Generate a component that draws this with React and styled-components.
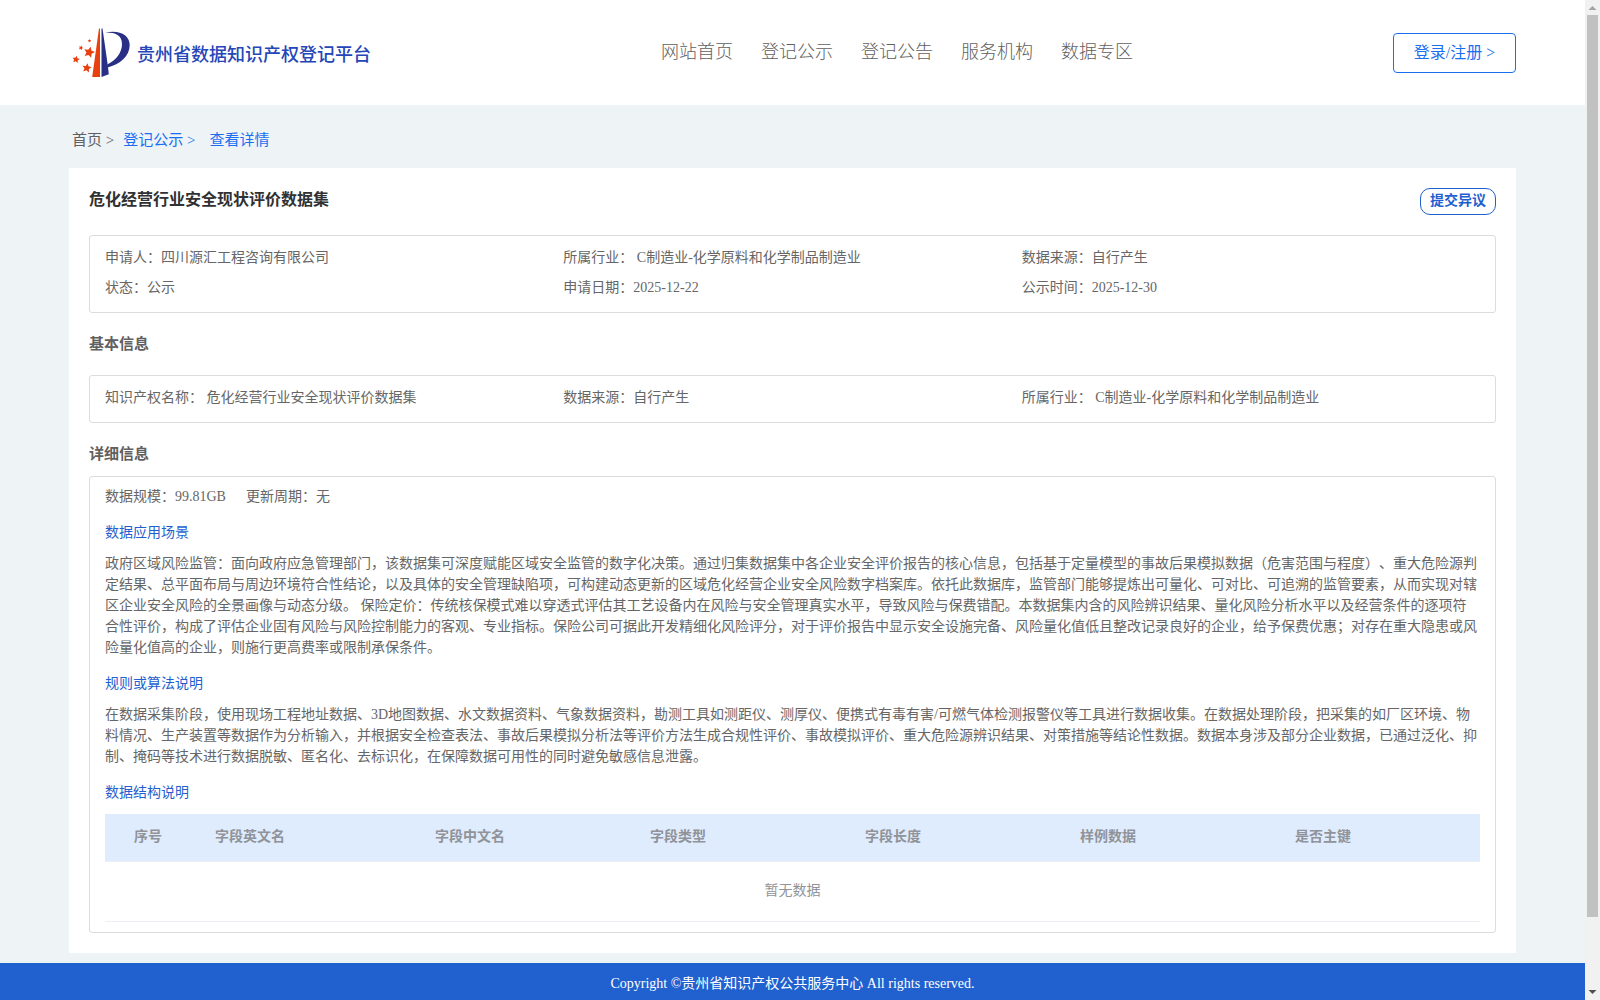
import React from "react";
import styled, { createGlobalStyle } from "styled-components";

const Global = createGlobalStyle`
  * { box-sizing: border-box; }
  html, body { margin: 0; padding: 0; }
  body {
    height: 1000px;
    overflow: hidden;
    color: #606266;
    font-family: "Liberation Serif", "Noto Sans CJK SC", serif;
    font-size: 14px;
    text-spacing-trim: space-all;
  }
  h1, h2, h3, p { margin: 0; }
`;

const Window = styled.div`
  display: flex;
  width: 1600px;
  height: 1000px;
`;

const Page = styled.div`
  display: flex;
  flex-direction: column;
  width: 1585px;
  height: 1000px;
  background: #eef3f6;
`;

const Header = styled.header`
  display: flex;
  align-items: center;
  height: 105px;
  flex: none;
  padding: 0 69px 0 72px;
  background: #fff;
`;

const Brand = styled.div`
  display: flex;
  align-items: center;
  width: 300px;
  padding-top: 1px;
  svg { flex: none; }
`;

const BrandName = styled.span`
  margin-left: 7px;
  padding-top: 3px;
  color: #2546b8;
  font-size: 18px;
  line-height: 24px;
  font-weight: 500;
  white-space: nowrap;
`;

const Nav = styled.nav`
  display: flex;
  gap: 28px;
  margin-left: 289px;
  padding-bottom: 1px;
`;

const NavLink = styled.a`
  color: #606060;
  font-size: 18px;
  line-height: 24px;
  white-space: nowrap;
  font-weight: 300;
`;

const LoginButton = styled.button`
  width: 123px;
  height: 40px;
  margin-left: auto;
  padding: 0;
  border: 1px solid #1a6ff0;
  border-radius: 4px;
  background: #fff;
  color: #1a6ff0;
  font-family: inherit;
  font-size: 16px;
  line-height: 24px;
  white-space: nowrap;
`;

const Breadcrumb = styled.div`
  display: flex;
  height: 63px;
  flex: none;
  padding: 23px 0 0 72px;
  font-size: 15px;
  line-height: 24px;
`;

const Crumb = styled.span`
  margin-right: ${(p) => p.$gap || 0}px;
  color: ${(p) => (p.$active ? "#1a6ff0" : "#606060")};
  white-space: pre;
`;

const Card = styled.main`
  display: flex;
  flex-direction: column;
  width: 1447px;
  height: 785px;
  flex: none;
  margin-left: 69px;
  padding: 20px 20px 0;
  background: #fff;
`;

const TitleRow = styled.div`
  display: flex;
  justify-content: space-between;
  height: 47px;
`;

const Title = styled.h1`
  padding-top: 1px;
  color: #303133;
  font-size: 16px;
  line-height: 22px;
  font-weight: 700;
`;

const ObjectionButton = styled.button`
  width: 76px;
  height: 27px;
  padding: 0 0 1px;
  border: 1px solid #1f5fcf;
  border-radius: 10px;
  background: #fff;
  color: #1f5fcf;
  font-family: inherit;
  font-size: 14px;
  line-height: 20px;
  font-weight: 700;
`;

const Box = styled.section`
  flex: none;
  height: ${(p) => p.$height}px;
  padding: ${(p) => p.$top}px 15px 0;
  border: 1px solid #dcdcde;
  border-radius: 3px;
`;

const InfoGrid = styled.div`
  display: grid;
  grid-template-columns: repeat(3, 1fr);
  grid-auto-rows: 30px;
  line-height: 30px;
`;

const Field = styled.div`
  color: #666;
  white-space: pre;
`;

const SectionTitle = styled.h2`
  height: ${(p) => p.$height}px;
  padding-top: ${(p) => p.$top}px;
  color: #606060;
  font-size: 15px;
  line-height: 22px;
  font-weight: 700;
`;

const Scale = styled.div`
  display: flex;
  gap: 20px;
  height: 21px;
  line-height: 21px;
`;

const SubTitle = styled.h3`
  margin: ${(p) => p.$top}px 0 ${(p) => p.$bottom || 10}px;
  color: #1f5fcf;
  font-size: 14px;
  line-height: 21px;
  font-weight: 400;
`;

const Line = styled.p`
  color: #666;
  line-height: 21px;
  white-space: nowrap;
`;

const TableHead = styled.div`
  display: grid;
  grid-template-columns: 100px 220px repeat(4, 215px) 1fr;
  height: 48px;
  border-bottom: 1px solid #ebeef5;
  background: #dfecfe;
  color: #909399;
  font-weight: 700;
  line-height: 45px;
`;

const HeadCell = styled.div`
  padding-left: ${(p) => (p.$index ? 29 : 10)}px;
`;

const Empty = styled.div`
  height: 60px;
  border-bottom: 1px solid #ebeef5;
  color: #909399;
  line-height: 57px;
  text-align: center;
`;

const Footer = styled.footer`
  height: 37px;
  margin-top: 10px;
  flex: none;
  background: #2160cf;
  color: #fff;
  line-height: 42px;
  text-align: center;
`;

const ScrollTrack = styled.div`
  display: flex;
  flex-direction: column;
  align-items: center;
  justify-content: space-between;
  width: 15px;
  height: 1000px;
  background: #f1f1f1;
`;

const ScrollThumb = styled.div`
  width: 11px;
  height: 902px;
  margin-bottom: 68px;
  background: #c1c1c1;
`;

const Arrow = styled.svg`
  flex: none;
  display: block;
`;

const star = (cx, cy, r, turn = 0) =>
  Array.from({ length: 10 }, (_, i) => {
    const rad = i % 2 ? r * 0.48 : r;
    const a = ((i * 36 - 90 + turn) * Math.PI) / 180;
    return `${(cx + rad * Math.cos(a)).toFixed(2)},${(cy + rad * Math.sin(a)).toFixed(2)}`;
  }).join(" ");

const Logo = () => (
  <svg width="58" height="50" viewBox="0 0 58 50">
    <path d="M27 0.5 H28 V49 H20.2 Z" fill="#e8410f" />
    <path d="M29.5 0.5 H30.5 L35.8 37.5 L36.8 46.3 L29.5 49 Z" fill="#2a2f86" />
    <path d="M33 4.6 C47 1.5 57.7 6.5 57.7 17 C57.7 28 48 36.5 35.5 39.5 L35.2 36.5 C44 32.5 50 24.5 50 16 C50 7 43 4.4 33 4.6 Z" fill="#2a2f86" />
    <g fill="#e8410f">
      <polygon points={star(17.2, 24.3, 5.8, 15)} />
      <polygon points={star(4, 31.5, 3.9, 10)} />
      <polygon points={star(14.8, 40, 4.9, 10)} />
      <polygon points={star(9, 19.8, 2.5, 20)} />
      <polygon points={star(17.5, 12.8, 1.8, 0)} />
    </g>
  </svg>
);

const navItems = ["网站首页", "登记公示", "登记公告", "服务机构", "数据专区"];

const summary = [
  "申请人：四川源汇工程咨询有限公司",
  "所属行业： C制造业-化学原料和化学制品制造业",
  "数据来源：自行产生",
  "状态：公示",
  "申请日期：2025-12-22",
  "公示时间：2025-12-30",
];

const basics = [
  "知识产权名称： 危化经营行业安全现状评价数据集",
  "数据来源：自行产生",
  "所属行业： C制造业-化学原料和化学制品制造业",
];

const scenario = [
  "政府区域风险监管：面向政府应急管理部门，该数据集可深度赋能区域安全监管的数字化决策。通过归集数据集中各企业安全评价报告的核心信息，包括基于定量模型的事故后果模拟数据（危害范围与程度）、重大危险源判",
  "定结果、总平面布局与周边环境符合性结论，以及具体的安全管理缺陷项，可构建动态更新的区域危化经营企业安全风险数字档案库。依托此数据库，监管部门能够提炼出可量化、可对比、可追溯的监管要素，从而实现对辖",
  "区企业安全风险的全景画像与动态分级。 保险定价：传统核保模式难以穿透式评估其工艺设备内在风险与安全管理真实水平，导致风险与保费错配。本数据集内含的风险辨识结果、量化风险分析水平以及经营条件的逐项符",
  "合性评价，构成了评估企业固有风险与风险控制能力的客观、专业指标。保险公司可据此开发精细化风险评分，对于评价报告中显示安全设施完备、风险量化值低且整改记录良好的企业，给予保费优惠；对存在重大隐患或风",
  "险量化值高的企业，则施行更高费率或限制承保条件。",
];

const rules = [
  "在数据采集阶段，使用现场工程地址数据、3D地图数据、水文数据资料、气象数据资料，勘测工具如测距仪、测厚仪、便携式有毒有害/可燃气体检测报警仪等工具进行数据收集。在数据处理阶段，把采集的如厂区环境、物",
  "料情况、生产装置等数据作为分析输入，并根据安全检查表法、事故后果模拟分析法等评价方法生成合规性评价、事故模拟评价、重大危险源辨识结果、对策措施等结论性数据。数据本身涉及部分企业数据，已通过泛化、抑",
  "制、掩码等技术进行数据脱敏、匿名化、去标识化，在保障数据可用性的同时避免敏感信息泄露。",
];

const columns = ["序号", "字段英文名", "字段中文名", "字段类型", "字段长度", "样例数据", "是否主键"];

export default function App() {
  return (
    <>
      <Global />
      <Window>
        <Page>
          <Header>
            <Brand>
              <Logo />
              <BrandName>贵州省数据知识产权登记平台</BrandName>
            </Brand>
            <Nav>
              {navItems.map((n) => <NavLink key={n}>{n}</NavLink>)}
            </Nav>
            <LoginButton>登录/注册 &gt;</LoginButton>
          </Header>
          <Breadcrumb>
            <Crumb $gap={9}>{"首页 >"}</Crumb>
            <Crumb $active $gap={14}>{"登记公示 >"}</Crumb>
            <Crumb $active>查看详情</Crumb>
          </Breadcrumb>
          <Card>
            <TitleRow>
              <Title>危化经营行业安全现状评价数据集</Title>
              <ObjectionButton>提交异议</ObjectionButton>
            </TitleRow>
            <Box $height={78} $top={7}>
              <InfoGrid>{summary.map((t) => <Field key={t}>{t}</Field>)}</InfoGrid>
            </Box>
            <SectionTitle $height={62} $top={20}>基本信息</SectionTitle>
            <Box $height={48} $top={7}>
              <InfoGrid>{basics.map((t) => <Field key={t}>{t}</Field>)}</InfoGrid>
            </Box>
            <SectionTitle $height={53} $top={20}>详细信息</SectionTitle>
            <Box $height={457} $top={9}>
              <Scale>
                <Field>数据规模：99.81GB</Field>
                <Field>更新周期：无</Field>
              </Scale>
              <SubTitle $top={15}>数据应用场景</SubTitle>
              {scenario.map((t) => <Line key={t}>{t}</Line>)}
              <SubTitle $top={15}>规则或算法说明</SubTitle>
              {rules.map((t) => <Line key={t}>{t}</Line>)}
              <SubTitle $top={15} $bottom={11}>数据结构说明</SubTitle>
              <TableHead>
                {columns.map((c, i) => <HeadCell key={c} $index={i === 0}>{c}</HeadCell>)}
              </TableHead>
              <Empty>暂无数据</Empty>
            </Box>
          </Card>
          <Footer>Copyright ©贵州省知识产权公共服务中心 All rights reserved.</Footer>
        </Page>
        <ScrollTrack>
          <Arrow width="15" height="15" viewBox="0 0 15 15"><path d="M3.5 10 L7.5 6 L11.5 10 Z" fill="#a3a3a3" /></Arrow>
          <ScrollThumb />
          <Arrow width="15" height="15" viewBox="0 0 15 15"><path d="M3.5 5 L7.5 9 L11.5 5 Z" fill="#505050" /></Arrow>
        </ScrollTrack>
      </Window>
    </>
  );
}
